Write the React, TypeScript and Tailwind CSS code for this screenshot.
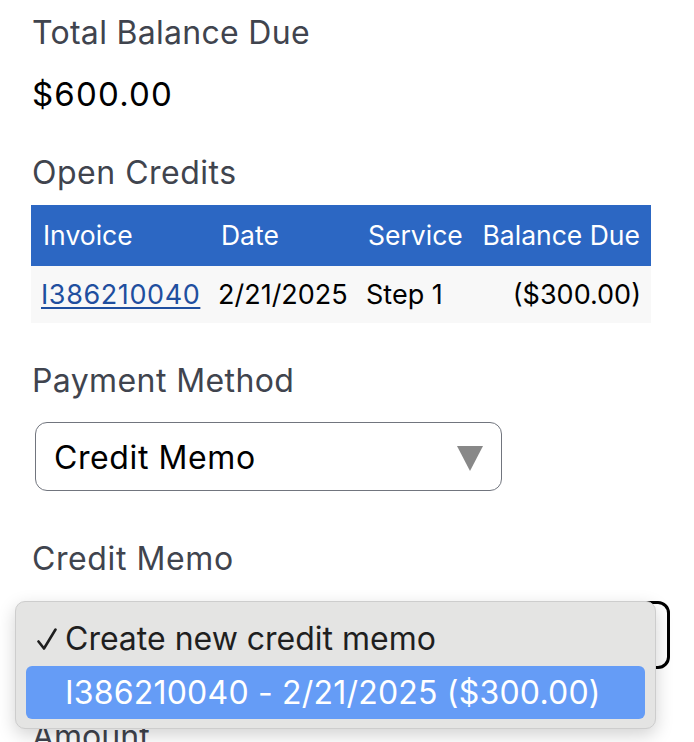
const CREDITS = [
  { invoice: 'I386210040', date: '2/21/2025', service: 'Step 1', balance: '($300.00)' },
];

function Caret() {
  return (
    <svg width="26" height="25" viewBox="0 0 26 25" className="shrink-0">
      <polygon points="0,0 26,0 13,25" fill="#888888" />
    </svg>
  );
}

function Check() {
  return (
    <svg width="20" height="22" viewBox="0 0 20 22">
      <path d="M1.5 13.5 L7 20.5 L18.5 1.5" fill="none" stroke="#1f1f1f" strokeWidth="2.6" strokeLinecap="round" strokeLinejoin="round" />
    </svg>
  );
}

export default function App() {
  return (
    <div className="min-h-[742px] overflow-hidden bg-white font-[Inter,sans-serif] text-[32px] leading-[40px]">
      <div className="ml-[31px] w-[620px] pt-[13px]">
        <p className="pl-px tracking-[0.3px] text-[#40444e]">Total Balance Due</p>
        <p className="mt-[21px] pl-px text-[33px] tracking-[1.2px] text-black">$600.00</p>

        <p className="mt-[39px] pl-px tracking-[0.5px] text-[#40444e]">Open Credits</p>
        <div className="mt-[12px]">
          <div className="grid h-[61px] grid-cols-[177px_148px_115px_180px] items-center bg-[#2c67c3] text-[26.5px] leading-[61px] text-white">
            <span className="pl-[12px]">Invoice</span>
            <span className="pl-[13px]">Date</span>
            <span className="pl-[12px]">Service</span>
            <span className="pr-[11px] text-right">Balance Due</span>
          </div>
          {CREDITS.map((c) => (
            <div
              key={c.invoice}
              className="grid h-[57px] grid-cols-[177px_148px_115px_180px] items-center bg-[#f8f8f8] text-[27px] leading-[57px] text-black"
            >
              <a href="#" className="pl-[10px] tracking-[0.6px] text-[#1f4f9f] underline decoration-[1.5px] underline-offset-[3px]">
                {c.invoice}
              </a>
              <span className="pl-[10px]">{c.date}</span>
              <span className="pl-[10px]">{c.service}</span>
              <span className="pr-[10px] text-right">{c.balance}</span>
            </div>
          ))}
        </div>

        <p className="mt-[38px] pl-px tracking-[0.4px] text-[#40444e]">Payment Method</p>
        <div className="mt-[21px] ml-[4px] flex h-[69px] w-[467px] items-center justify-between rounded-[12px] border-[1.5px] border-[#71757e] bg-white pl-[18px] pr-[18px] pt-[3px] text-black">
          <span className="tracking-[0.6px]">Credit Memo</span>
          <Caret />
        </div>

        <p className="mt-[48px] pl-px tracking-[0.6px] text-[#40444e]">Credit Memo</p>
        <div className="relative mt-[22px] ml-[4px] h-[68px] w-[635px] rounded-[12px] border-[3px] border-black bg-white">
          {/* open native option list */}
          <div className="absolute left-[-23px] top-[-3px] z-10 w-[641px] rounded-[10px] border border-[#cdcdcd] bg-[#e4e4e3] px-[10px] pb-[9px] pt-[10px] shadow-[0_6px_18px_rgba(0,0,0,0.18)]">
            <div className="flex h-[53px] items-center pl-[11px] text-[#1f1f1f]">
              <span className="flex w-[28px] items-center">
                <Check />
              </span>
              <span>Create new credit memo</span>
            </div>
            <div className="mt-px flex h-[53px] items-center rounded-[6px] bg-[#659cf6] pl-[39px] tracking-[0.2px] text-white">
              I386210040 - 2/21/2025 ($300.00)
            </div>
          </div>
        </div>

        <p className="mt-[48px] pl-px text-[#40444e]">Amount</p>
      </div>
    </div>
  );
}
